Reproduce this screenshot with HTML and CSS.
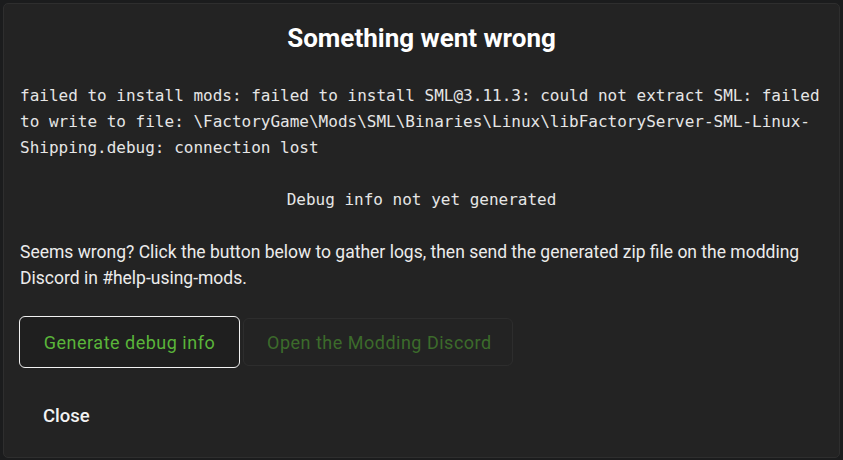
FILE: index.html
```html
<!DOCTYPE html>
<html>
<head>
<meta charset="utf-8">
<link rel="stylesheet" href="styles.css">
</head>
<body>
<div class="dialog">
  <h2 class="title">Something went wrong</h2>
  <div class="error">failed to install mods: failed to install SML@3.11.3: could not extract SML: failed to write to file: \FactoryGame\Mods\SML\Binaries\Linux\libFactoryServer-SML-Linux-Shipping.debug: connection lost</div>
  <div class="debug">Debug info not yet generated</div>
  <p class="hint">Seems wrong? Click the button below to gather logs, then send the generated zip file on the modding Discord in #help-using-mods.</p>
  <div class="actions">
    <button class="btn btn-primary">Generate debug info</button>
    <button class="btn btn-disabled">Open the Modding Discord</button>
  </div>
  <div class="footer">
    <button class="btn-close">Close</button>
  </div>
</div>
</body>
</html>
```
FILE: styles.css
```css
html, body {
  margin: 0;
  padding: 0;
  background: #1b1c1d;
  height: 460px;
  overflow: hidden;
}
.dialog {
  box-sizing: border-box;
  margin: 3px 3px 0 3px;
  height: 455px;
  border: 1px solid #2e2e2e;
  border-radius: 5px;
  background: #232323;
  padding: 18px 16px 0 16px;
  font-family: Roboto, "Noto Sans", sans-serif;
  color: #ffffff;
}
.title {
  margin: 0;
  text-align: center;
  font-size: 26px;
  font-weight: 700;
  line-height: 32px;
}
.error {
  margin-top: 29px;
  font-family: "DejaVu Sans Mono", monospace;
  font-size: 16px;
  line-height: 26px;
  color: #e6e6e6;
  overflow-wrap: break-word;
}
.debug {
  margin-top: 26px;
  text-align: center;
  font-family: "DejaVu Sans Mono", monospace;
  font-size: 16px;
  line-height: 26px;
  color: #e6e6e6;
}
.hint {
  margin: 26px 0 0 0;
  font-size: 17.5px;
  line-height: 26px;
  color: #ececec;
}
.actions {
  margin-top: 25px;
  display: flex;
  align-items: center;
  gap: 3px;
  margin-left: -1px;
}
.btn {
  box-sizing: border-box;
  font-family: Roboto, "Noto Sans", sans-serif;
  font-size: 18px;
  letter-spacing: 0.5px;
  background: transparent;
  border-radius: 6px;
  padding: 0 23px;
  white-space: nowrap;
}
.btn-primary {
  height: 52px;
  width: 221px;
  border: 1px solid #f2f2f2;
  color: #5ab53a;
  background: #1f1f1f;
}
.btn-disabled {
  height: 48px;
  width: 270px;
  border: 1px solid #2d2d2d;
  color: #3c6b2b;
}
.footer {
  margin-top: 30px;
}
.btn-close {
  background: transparent;
  border: none;
  color: #f2f2f2;
  font-family: Roboto, "Noto Sans", sans-serif;
  font-size: 18.5px;
  font-weight: 500;
  padding: 0 0 0 23px;
  height: 36px;
}
```
